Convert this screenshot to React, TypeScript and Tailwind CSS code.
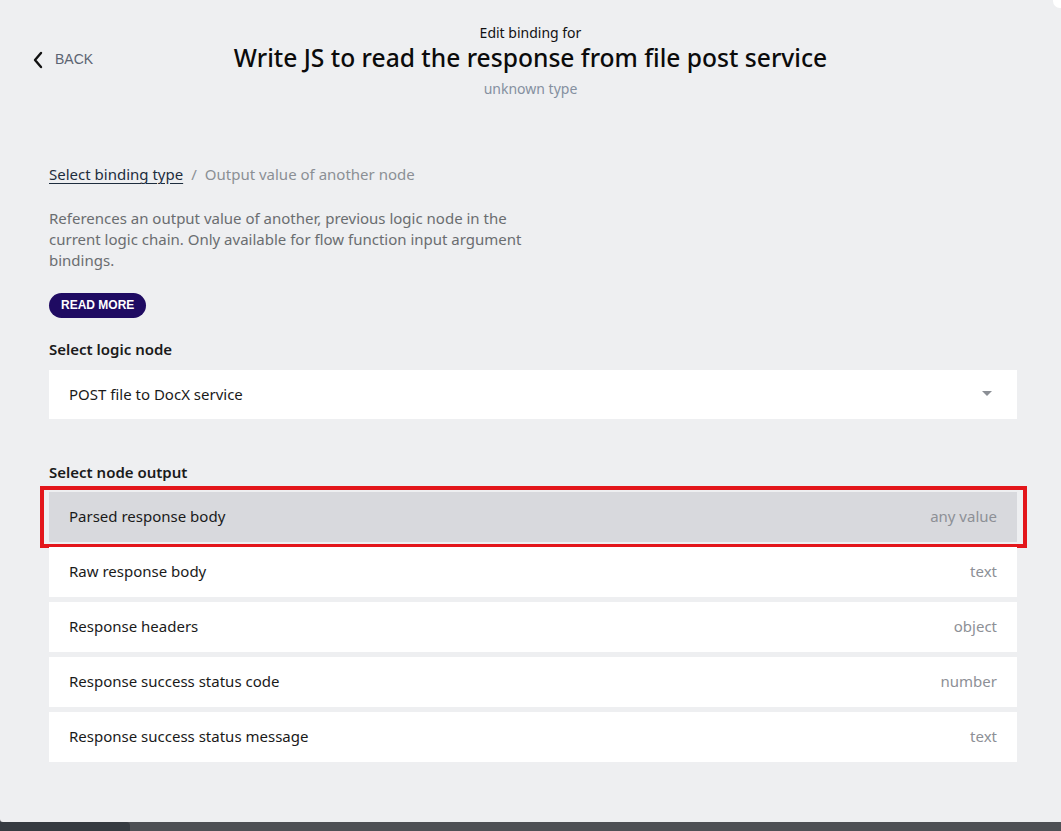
import React from "react";

const rows = [
  { label: "Parsed response body", type: "any value", selected: true },
  { label: "Raw response body", type: "text" },
  { label: "Response headers", type: "object" },
  { label: "Response success status code", type: "number" },
  { label: "Response success status message", type: "text" },
];

export default function App() {
  return (
    <div
      className="w-[1061px] h-[831px] bg-[#4e5055] flex flex-col overflow-hidden relative"
      style={{ fontFamily: '"Noto Sans", "Open Sans", sans-serif' }}
    >
      <div className="h-[822px] bg-[#eeeff1] rounded-bl-[3px] flex flex-col">
        {/* header */}
        <div className="relative flex flex-col items-center pt-[23px]">
          <div
            className="absolute left-[32px] top-[49px] flex items-center gap-[10px] text-[#5b6472] text-[14px]"
            style={{ fontFamily: '"Liberation Sans", Arial, sans-serif' }}
          >
            <svg width="13" height="18" viewBox="0 0 13 18" fill="none">
              <path d="M9 2 L3 9 L9 16" stroke="#111" strokeWidth="2.4" strokeLinecap="round" strokeLinejoin="round" />
            </svg>
            <span>BACK</span>
          </div>
          <div className="text-[14px] leading-[20px] text-[#111]">Edit binding for</div>
          <div className="text-[24.6px] leading-[29px] font-medium text-[#0b0b0b]">
            Write JS to read the response from file post service
          </div>
          <div className="text-[14px] leading-[20px] text-[#8590a0] mt-[7px]">unknown type</div>
        </div>

        <div className="px-[49px] pr-[44px] pt-[65px] flex flex-col">
          <div className="text-[15px] leading-[20px] flex items-center gap-[8px]">
            <span className="underline text-[#1d2d3e] underline-offset-[3px]">Select binding type</span>
            <span className="text-[#8b8f95]">/</span>
            <span className="text-[#8b8f95]">Output value of another node</span>
          </div>
          <p className="mt-[24px] text-[15px] leading-[21px] text-[#6a6d70] w-[495px]">
            References an output value of another, previous logic node in the current logic chain. Only available for flow function input argument bindings.
          </p>
          <div className="mt-[20px]">
            <span
              className="inline-flex items-center h-[25px] px-[12px] rounded-full bg-[#1f0b62] text-white text-[12px] font-bold"
              style={{ fontFamily: '"Liberation Sans", Arial, sans-serif' }}
            >
              READ MORE
            </span>
          </div>

          <div className="mt-[21px] text-[15px] leading-[20px] font-semibold text-[#1a1a1a]">Select logic node</div>
          <div className="mt-[11px] h-[49px] bg-white flex items-center justify-between pl-[20px] pr-[25px] text-[15px] text-[#1a1a1a]">
            <span>POST file to DocX service</span>
            <svg width="10" height="6" viewBox="0 0 10 6">
              <path d="M0 0 L10 0 L5 5 Z" fill="#8b8f95" />
            </svg>
          </div>

          <div className="mt-[43px] text-[15px] leading-[20px] font-semibold text-[#1a1a1a]">Select node output</div>
          <div className="mt-[10px] flex flex-col gap-[5px]">
            {rows.map((r) => (
              <div
                key={r.label}
                className={`relative h-[50px] flex items-center justify-between pl-[20px] pr-[20px] text-[15px] ${
                  r.selected ? "bg-[#d8d9dd]" : "bg-white"
                }`}
              >
                <span className="text-[#1a1a1a]">{r.label}</span>
                <span className="text-[#8d9096]">{r.type}</span>
                {r.selected && (
                  <div className="absolute left-[-9px] right-[-10px] top-[-6px] bottom-[-6px] border-[4px] border-[#e3161b] pointer-events-none" />
                )}
              </div>
            ))}
          </div>
        </div>
      </div>
      <div className="absolute left-0 bottom-0 h-[9px] w-[130px] bg-[#363b41] rounded-tr-[4px]" />
      <div className="absolute right-[-6px] top-[-6px] w-[14px] h-[14px] rounded-full bg-white" />
    </div>
  );
}
